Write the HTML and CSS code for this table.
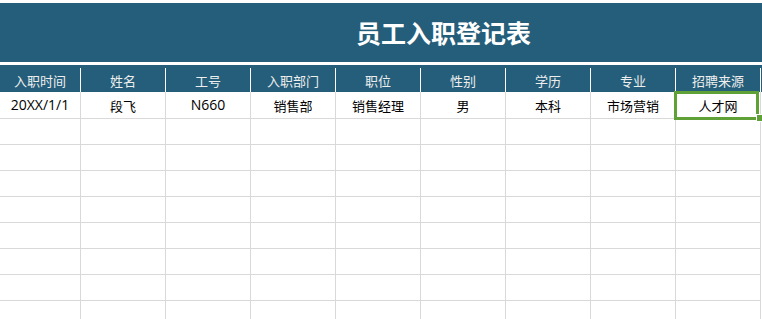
FILE: index.html
```html
<!DOCTYPE html>
<html lang="zh-CN">
<head>
<meta charset="utf-8">
<title>员工入职登记表</title>
<link rel="stylesheet" href="styles.css">
</head>
<body>
<div class="sheet">
  <div class="title-bar"><h1 class="title">员工入职登记表</h1></div>
  <div class="header-row">
    <div class="hcell c1">入职时间</div>
    <div class="hcell">姓名</div>
    <div class="hcell">工号</div>
    <div class="hcell">入职部门</div>
    <div class="hcell">职位</div>
    <div class="hcell">性别</div>
    <div class="hcell">学历</div>
    <div class="hcell">专业</div>
    <div class="hcell">招聘来源</div>
  </div>
  <div class="row first">
    <div class="cell"><span class="latin">20XX/1/1</span></div>
    <div class="cell">段飞</div>
    <div class="cell"><span class="latin">N660</span></div>
    <div class="cell">销售部</div>
    <div class="cell">销售经理</div>
    <div class="cell">男</div>
    <div class="cell">本科</div>
    <div class="cell">市场营销</div>
    <div class="cell">人才网</div>
  </div>
  <div class="row"><div class="cell"></div><div class="cell"></div><div class="cell"></div><div class="cell"></div><div class="cell"></div><div class="cell"></div><div class="cell"></div><div class="cell"></div><div class="cell"></div></div>
  <div class="row"><div class="cell"></div><div class="cell"></div><div class="cell"></div><div class="cell"></div><div class="cell"></div><div class="cell"></div><div class="cell"></div><div class="cell"></div><div class="cell"></div></div>
  <div class="row"><div class="cell"></div><div class="cell"></div><div class="cell"></div><div class="cell"></div><div class="cell"></div><div class="cell"></div><div class="cell"></div><div class="cell"></div><div class="cell"></div></div>
  <div class="row"><div class="cell"></div><div class="cell"></div><div class="cell"></div><div class="cell"></div><div class="cell"></div><div class="cell"></div><div class="cell"></div><div class="cell"></div><div class="cell"></div></div>
  <div class="row"><div class="cell"></div><div class="cell"></div><div class="cell"></div><div class="cell"></div><div class="cell"></div><div class="cell"></div><div class="cell"></div><div class="cell"></div><div class="cell"></div></div>
  <div class="row"><div class="cell"></div><div class="cell"></div><div class="cell"></div><div class="cell"></div><div class="cell"></div><div class="cell"></div><div class="cell"></div><div class="cell"></div><div class="cell"></div></div>
  <div class="row"><div class="cell"></div><div class="cell"></div><div class="cell"></div><div class="cell"></div><div class="cell"></div><div class="cell"></div><div class="cell"></div><div class="cell"></div><div class="cell"></div></div>
  <div class="row"><div class="cell"></div><div class="cell"></div><div class="cell"></div><div class="cell"></div><div class="cell"></div><div class="cell"></div><div class="cell"></div><div class="cell"></div><div class="cell"></div></div>
  <div class="selection"></div>
  <div class="handle"></div>
</div>
</body>
</html>
```

FILE: styles.css
```css
html, body {
  margin: 0;
  padding: 0;
  background: #ffffff;
  overflow: hidden;
}
body {
  font-family: "Noto Sans CJK SC", "Noto Sans", sans-serif;
  font-size: 13px;
  color: #000;
}
.sheet {
  position: relative;
  padding-top: 3px;
  width: 762px;
  height: 319px;
  box-sizing: border-box;
}
.title-bar {
  background: #245e7a;
  height: 59px;
  display: flex;
  align-items: center;
  padding-left: 356px;
  margin-bottom: 3px;
}
.title {
  margin: 0;
  color: #ffffff;
  font-size: 25px;
  font-weight: bold;
  letter-spacing: 0;
  line-height: 1;
}
.header-row {
  background: #245e7a;
  padding-top: 3px;
  display: grid;
  grid-template-columns: 81px repeat(8, 85px) 1fr;
  height: 27px;
  box-sizing: border-box;
}
.hcell {
  border-right: 1px solid #ffffff;
  color: #eeeeee;
  display: flex;
  align-items: center;
  justify-content: center;
  line-height: 1;
}
.row {
  display: grid;
  grid-template-columns: 81px repeat(8, 85px) 1fr;
  height: 26px;
}
.row.first {
  height: 27px;
}
.cell {
  border-right: 1px solid #d9d9d9;
  border-bottom: 1px solid #d9d9d9;
  display: flex;
  align-items: center;
  justify-content: center;
  line-height: 1;
}
.latin {
  font-family: "Open Sans", "Noto Sans", sans-serif;
  font-size: 14px;
}
.selection {
  position: absolute;
  left: 674px;
  top: 91px;
  width: 85px;
  height: 29px;
  box-sizing: border-box;
  border: 3px solid #5fa136;
}
.handle {
  position: absolute;
  left: 757px;
  top: 115px;
  width: 5px;
  height: 6px;
  background: #5fa136;
  box-shadow: 0 0 0 1px #ffffff;
}
```
